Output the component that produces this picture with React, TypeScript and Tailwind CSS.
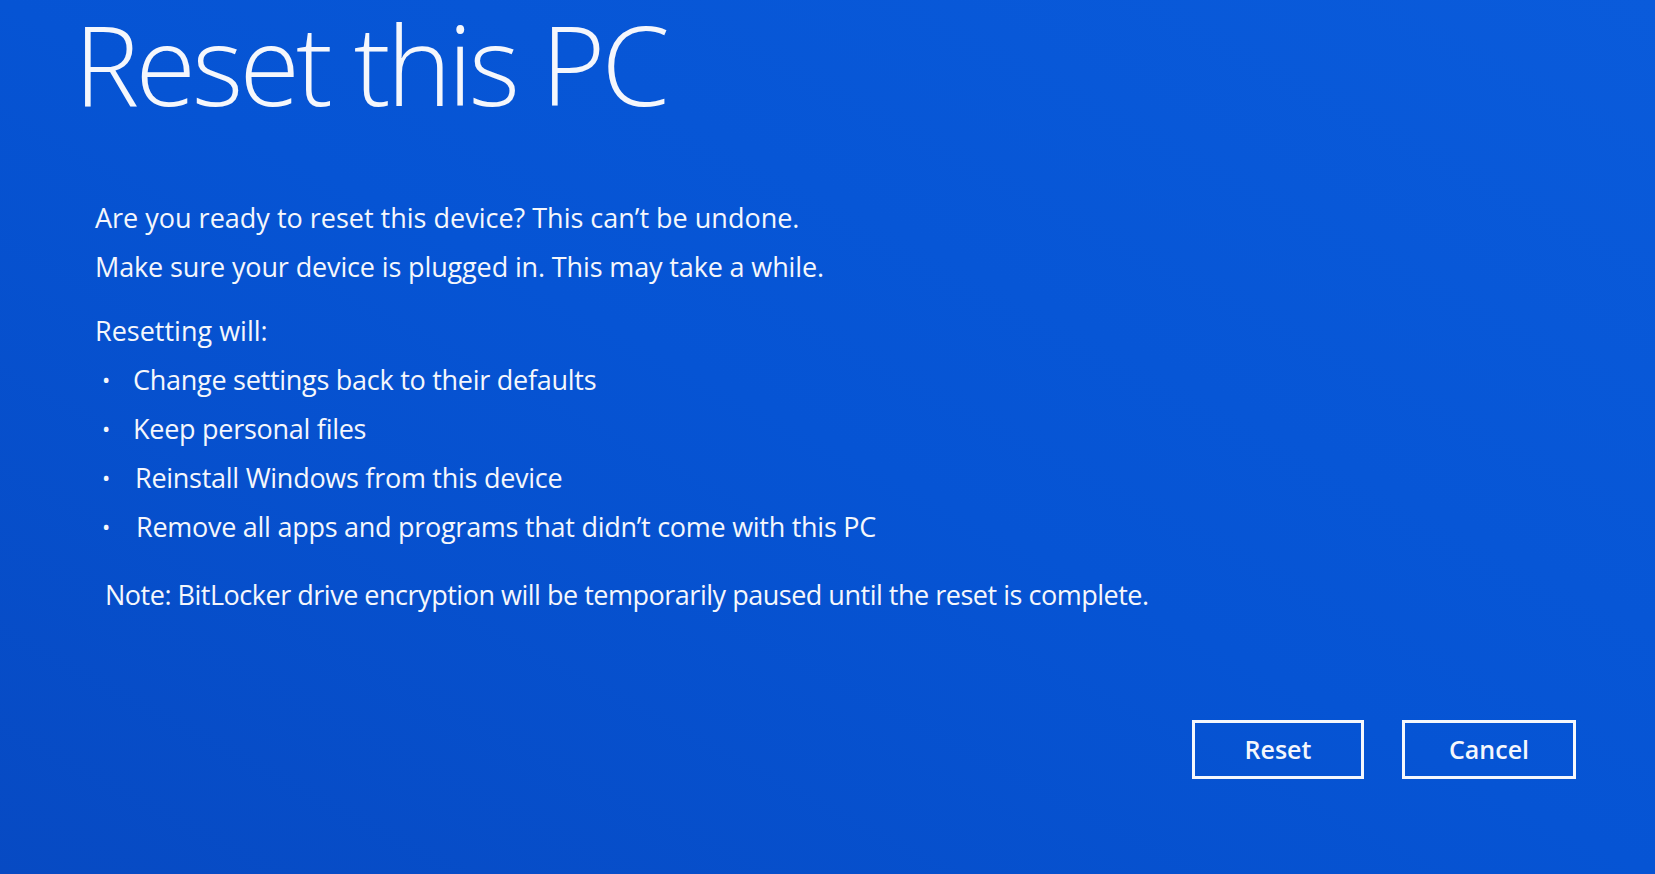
const bullets = [
  'Change settings back to their defaults',
  'Keep personal files',
  'Reinstall Windows from this device',
  'Remove all apps and programs that didn\u2019t come with this PC',
];

export default function App() {
  return (
    <div
      className="min-h-screen w-full overflow-hidden bg-linear-to-bl from-[#0a5bdb] via-[#0654d4] to-[#074ac3] text-[#f5f7fc]"
      style={{ fontFamily: "'Open Sans', 'Noto Sans', sans-serif" }}
    >
      <div className="flex h-[874px] flex-col">
        {/* Title */}
        <h1 className="ml-[74px] pt-[8px] text-[110px] font-light leading-[110px] tracking-[-0.035em]">
          Reset this PC
        </h1>

        {/* Body */}
        <div className="ml-[95px] mt-[75px] flex flex-col text-[27px] leading-[49px]">
          <p>Are you ready to reset this device? This can&rsquo;t be undone.</p>
          <p className="tracking-[-0.005em]">Make sure your device is plugged in. This may take a while.</p>

          <p className="mt-[15px]">Resetting will:</p>
          <ul className="flex flex-col tracking-[-0.01em]">
            {bullets.map((b, i) => (
              <li key={b} className="flex items-center">
                <span className="ml-[7px] w-[31px] text-[22px]">&bull;</span>
                <span className={i === 3 ? 'ml-[3px]' : i === 2 ? 'ml-[2px]' : ''}>{b}</span>
              </li>
            ))}
          </ul>

          <p className="mt-[19px] ml-[10px] tracking-[-0.018em]">
            Note: BitLocker drive encryption will be temporarily paused until the reset is complete.
          </p>
        </div>

        {/* Buttons */}
        <div className="mt-[101px] flex justify-end gap-[38px] pr-[79px]">
          <button className="flex h-[59px] w-[172px] items-center justify-center border-[3px] border-[#f5f7fc] text-[25px] font-semibold">
            Reset
          </button>
          <button className="flex h-[59px] w-[174px] items-center justify-center border-[3px] border-[#f5f7fc] text-[25px] font-semibold">
            Cancel
          </button>
        </div>
      </div>
    </div>
  );
}
